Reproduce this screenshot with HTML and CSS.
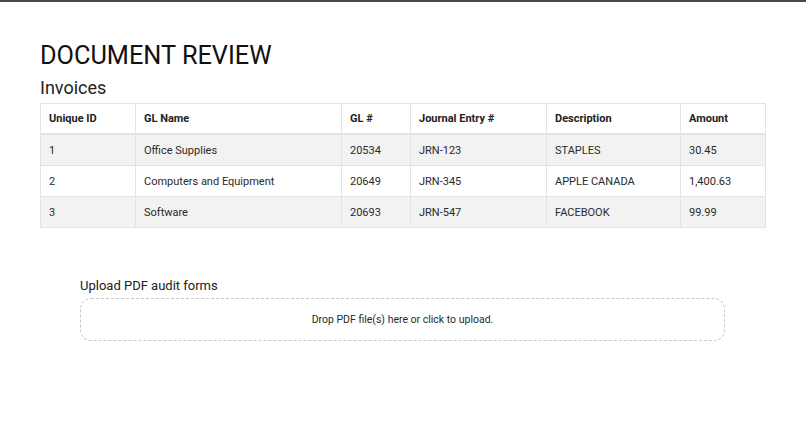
FILE: index.html
```html
<!DOCTYPE html>
<html>
<head>
<meta charset="utf-8">
<link rel="stylesheet" href="styles.css">
</head>
<body>
<div class="page">
  <h1 class="title">DOCUMENT REVIEW</h1>
  <h2 class="subtitle">Invoices</h2>
  <table class="grid">
    <colgroup>
      <col class="c1"><col class="c2"><col class="c3"><col class="c4"><col class="c5"><col class="c6">
    </colgroup>
    <thead>
      <tr><th>Unique ID</th><th>GL Name</th><th>GL #</th><th>Journal Entry #</th><th>Description</th><th>Amount</th></tr>
    </thead>
    <tbody>
      <tr class="odd"><td>1</td><td>Office Supplies</td><td>20534</td><td>JRN-123</td><td>STAPLES</td><td>30.45</td></tr>
      <tr><td>2</td><td>Computers and Equipment</td><td>20649</td><td>JRN-345</td><td>APPLE CANADA</td><td>1,400.63</td></tr>
      <tr class="odd"><td>3</td><td>Software</td><td>20693</td><td>JRN-547</td><td>FACEBOOK</td><td>99.99</td></tr>
    </tbody>
  </table>
  <div class="upload">
    <div class="upload-label">Upload PDF audit forms</div>
    <div class="dropzone">Drop PDF file(s) here or click to upload.</div>
  </div>
</div>
</body>
</html>
```
FILE: styles.css
```css
html, body { margin: 0; padding: 0; background: #fff; }
body {
  border-top: 2px solid #4a4a4a;
  font-family: Roboto, "Liberation Sans", sans-serif;
  color: #212529;
}
.page { padding: 0 41px 0 40px; }
.title {
  font-family: Roboto, sans-serif;
  font-weight: 400;
  font-size: 25.3px;
  line-height: 30px;
  margin: 39px 0 0 0;
  color: #111;
}
.subtitle {
  font-family: Roboto, sans-serif;
  font-weight: 400;
  font-size: 18px;
  line-height: 22px;
  margin: 6px 0 0 0;
  color: #222;
}
.grid {
  margin-top: 4px;
  width: 725px;
  border-collapse: collapse;
  table-layout: fixed;
  font-size: 11px;
}
.c1 { width: 95px; } .c2 { width: 206px; } .c3 { width: 69px; }
.c4 { width: 136px; } .c5 { width: 134px; } .c6 { width: 85px; }
.grid th, .grid td {
  border: 1px solid #e3e3e3;
  text-align: left;
  padding: 0 8px;
  height: 30px;
  color: #2a2a2a;
}
.grid th { height: 29px; font-weight: 700; color: #222; border-bottom: 2px solid #e3e3e3; }
.grid td { font-weight: 400; }
.grid tr.odd td { background: #f2f2f2; }
.upload { margin: 50px 40px 0 40px; }
.upload-label { font-size: 13px; color: #222; line-height: 16px; }
.dropzone {
  margin-top: 4px;
  height: 41px;
  border: 1.5px dashed #c8c8c8;
  border-radius: 11px;
  display: flex;
  align-items: center;
  justify-content: center;
  font-size: 10.5px;
  color: #2a2a2a;
}
```
